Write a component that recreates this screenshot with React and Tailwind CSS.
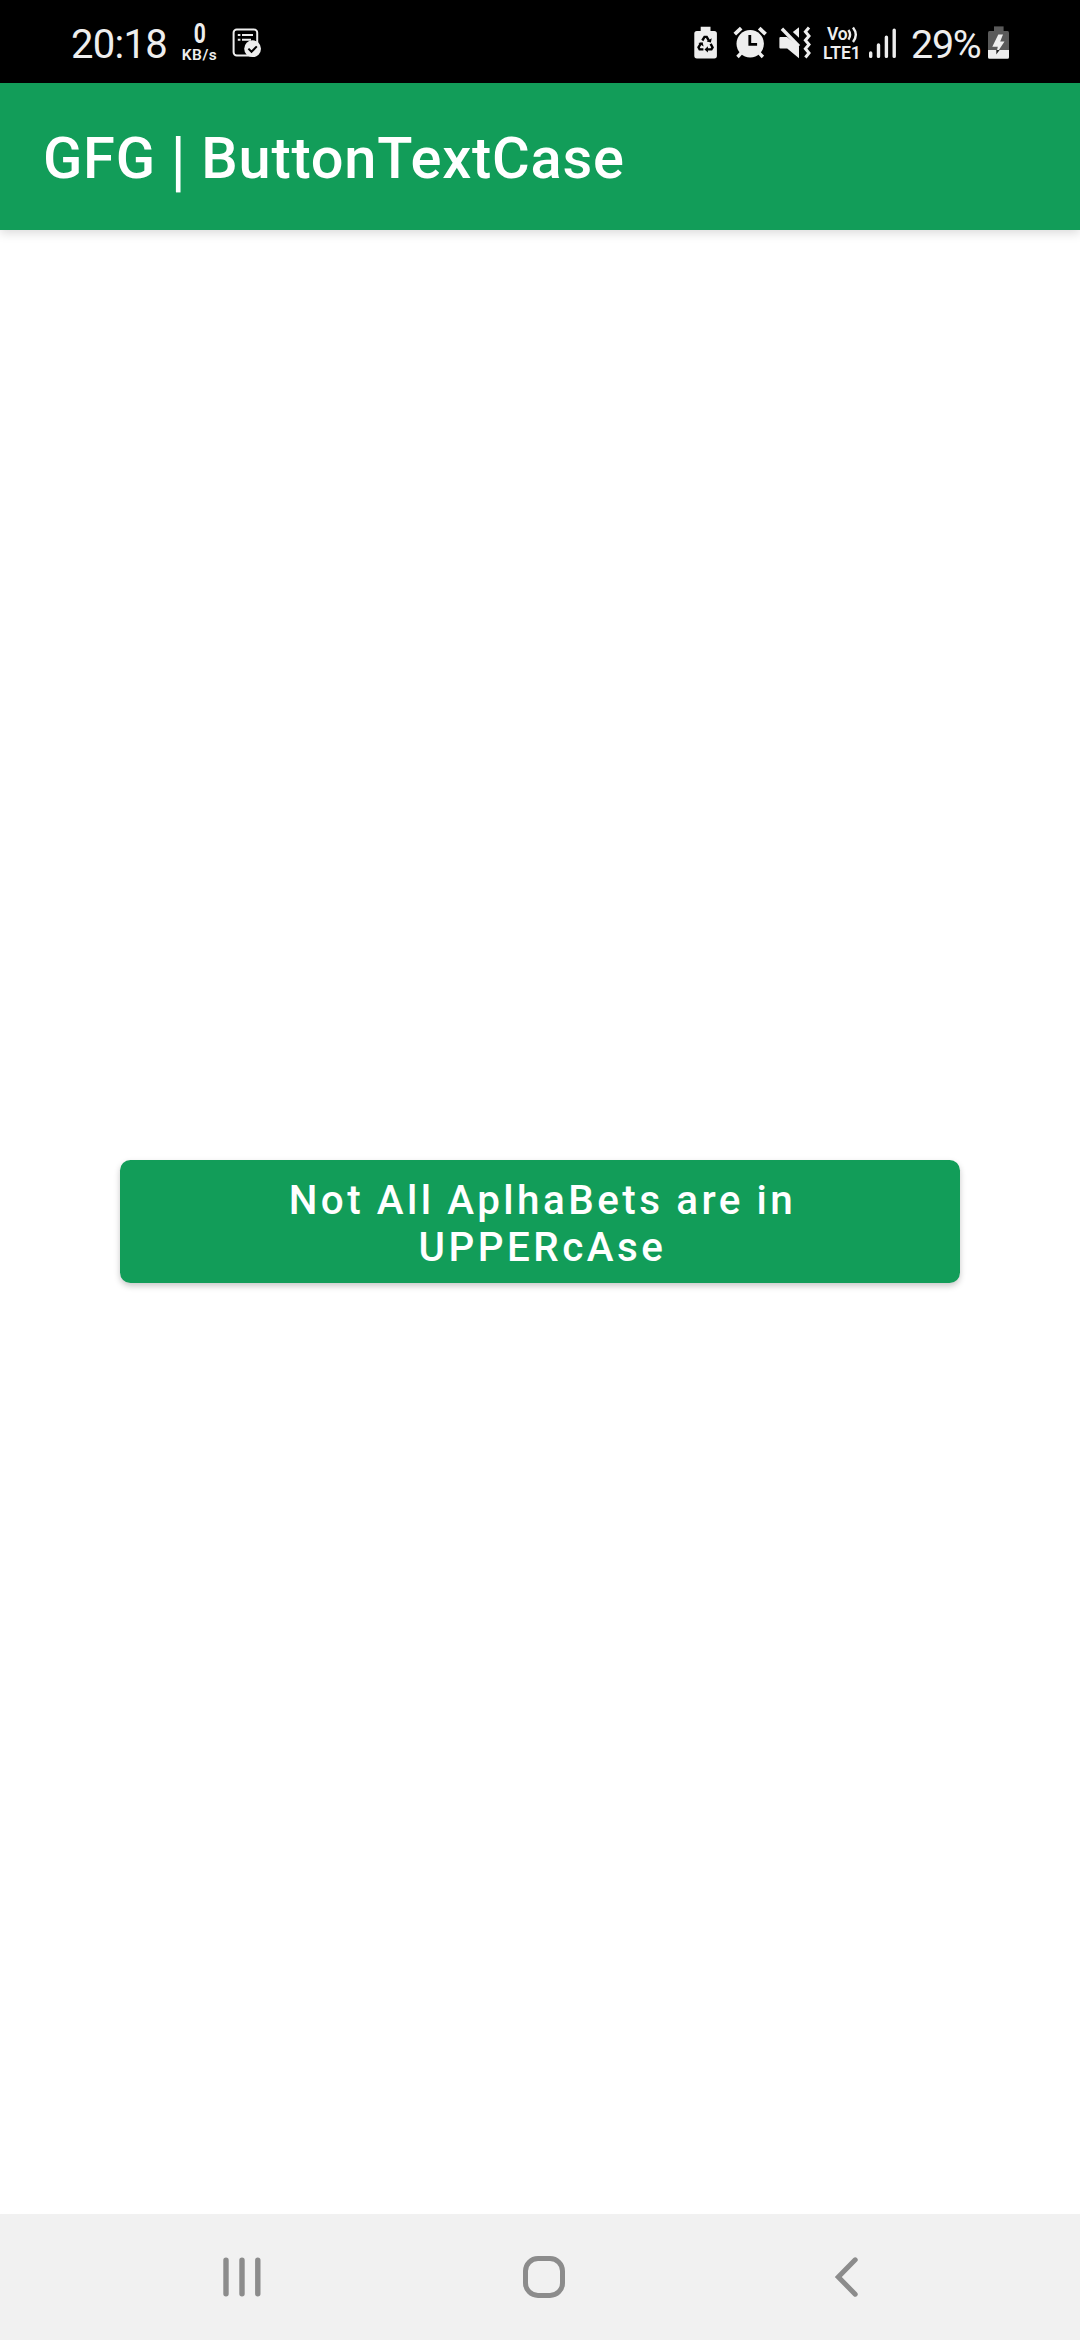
import React from "react";

function TaskIcon() {
  return (
    <svg className="ml-[15px] h-[83px] w-[30px] shrink-0" viewBox="232 0 30 83" fill="none">
      <rect x="233.6" y="29.4" width="23.6" height="26" rx="3.2" stroke="#eee" strokeWidth="2" />
      <path d="M237.8 35h2.6M242 35h11M237.8 39.8h2.6M242 39.8h9" stroke="#eee" strokeWidth="2" />
      <circle cx="252.6" cy="48.7" r="8.4" fill="#eee" />
      <path d="M248.4 48.6l3.1 3.2 5.3-5.4" stroke="#000" strokeWidth="2" />
    </svg>
  );
}

function BatterySaverIcon() {
  return (
    <svg className="h-[83px] w-[24px] shrink-0" viewBox="693 0 24 83" fill="none">
      <path d="M699.7 26.7h9.8v4.3h3.8a2.6 2.6 0 0 1 2.6 2.6v22.2a2.6 2.6 0 0 1-2.6 2.6h-17.4a2.6 2.6 0 0 1-2.6-2.6V33.6a2.6 2.6 0 0 1 2.6-2.6h3.8z" fill="#eee" />
      <g stroke="#000" strokeWidth="2.4">
        <path d="M701.3 40.5l2.2-3.6h2.2l2.2 3.8" />
        <path d="M709.6 43.8l2 3.6-1.2 2h-5" />
        <path d="M702.4 49.4h-3.8l-1.1-2 2.6-4.2" />
      </g>
      <path d="M705.7 41.4l4.2 1.1.8-4.2zM706.9 46.2v6.4l-3.4-3.2zM697.3 43.1l4.3-.9 1 4.2z" fill="#000" />
    </svg>
  );
}

function AlarmIcon() {
  return (
    <svg className="ml-[15px] h-[83px] w-[35px] shrink-0" viewBox="732 0 35 83" fill="none">
      <circle cx="749.2" cy="43.7" r="13.7" fill="#eee" />
      <path d="M733.8 34.2l6.4-6M764.6 34.2l-6.4-6" stroke="#eee" strokeWidth="3.8" />
      <path d="M740.5 52.6l-4 4.4M757.9 52.6l4 4.4" stroke="#eee" strokeWidth="3.4" />
      <path d="M748.8 35v9.3h7.3" stroke="#000" strokeWidth="2.8" />
    </svg>
  );
}

function MuteVibrateIcon() {
  return (
    <svg className="ml-[11px] h-[83px] w-[32px] shrink-0" viewBox="778 0 32 83" fill="none">
      <path d="M779.4 37h6.6l12 9.5v11.7l-11.8-9.8h-6.8a1 1 0 0 1-1-1V38a1 1 0 0 1 1-1z" fill="#eee" />
      <path d="M798 27.2v10.5l-6.2-5.7z" fill="#eee" />
      <path d="M780.9 28.8l17 17.4" stroke="#eee" strokeWidth="3.4" />
      <path d="M808 27.5l-3.6 4.3 3.6 4.2-3.6 4.3 3.6 4.2-3.6 4.3 3.6 4.2-3.6 4.5" stroke="#eee" strokeWidth="3" />
    </svg>
  );
}

function VolteLabel() {
  return (
    <div className="ml-[11px] flex h-[83px] w-[40px] shrink-0 flex-col pt-[26px] text-[#eee]">
      <div className="flex h-[17px] items-center pl-[5px]">
        <span className="w-[20px] text-[17.5px] leading-[17px] font-semibold tracking-[-0.3px]">Vo</span>
        <svg className="h-[17px] w-[12px] shrink-0" viewBox="846 25.5 12 17" fill="none" stroke="#eee" strokeWidth="2.4">
          <path d="M847.4 29.5q3.4 4.8 0 9.6M852 27q5.6 7.3 0 14.6" />
        </svg>
      </div>
      <span className="pl-[1px] text-[17.5px] leading-[20px] font-semibold tracking-[-0.1px]">LTE1</span>
    </div>
  );
}

function SignalIcon() {
  return (
    <svg className="ml-[6px] h-[83px] w-[29px] shrink-0" viewBox="868 0 29 83" stroke="#eee" strokeWidth="3.4" strokeLinecap="round">
      <path d="M870.7 53v3.4M878.5 45v11.4M886.4 37.3v19.1M894.2 30.2v26.2" />
    </svg>
  );
}

function ChargingIcon() {
  return (
    <svg className="h-[83px] w-[22px] shrink-0" viewBox="988 0 22 83">
      <path d="M994 26.4h9.6v4.8H994z" fill="#5a5a5a" />
      <path d="M989.5 31h18a1.5 1.5 0 0 1 1.5 1.5V50h-21V32.5a1.5 1.5 0 0 1 1.5-1.5z" fill="#5a5a5a" />
      <path d="M988 50h21v7.3a1.5 1.5 0 0 1-1.5 1.5h-18a1.5 1.5 0 0 1-1.5-1.5z" fill="#eee" />
      <path d="M998.3 34.5h4.7l-2.8 7h4.3L996.2 54l1.6-7.3h-5.5z" fill="#eee" />
      <path d="M996.3 50h3.3l-3.3 4.5z" fill="#222" />
    </svg>
  );
}

function StatusBar() {
  return (
    <header className="flex h-[83px] bg-black pl-[71px] pr-[70px] text-[#eee]">
      <span className="w-[110px] text-[40px] leading-[89px] tracking-[-0.7px]">20:18</span>
      <div className="flex w-[36px] flex-col items-center pt-[22px] pl-px">
        <span className="scale-x-[.78] text-[27px] leading-[24px] font-bold">0</span>
        <span className="text-[15.5px] leading-[18px] font-semibold tracking-[0.5px]">KB/s</span>
      </div>
      <TaskIcon />
      <div className="ml-auto flex">
        <BatterySaverIcon />
        <AlarmIcon />
        <MuteVibrateIcon />
        <VolteLabel />
        <SignalIcon />
        <span className="ml-[14px] w-[77px] text-[39.5px] leading-[89px] tracking-[-1.3px]">29%</span>
        <ChargingIcon />
      </div>
    </header>
  );
}

function NavigationBar() {
  return (
    <nav className="flex h-[126px] items-center bg-[#f1f1f1] pl-[223px]">
      <svg className="h-[42px] w-[38px]" viewBox="0 0 38 42" stroke="#8c8c8c" strokeWidth="5.4" strokeLinecap="round">
        <path d="M3 4.2v33.6M19 4.2v33.6M34.8 4.2v33.6" />
      </svg>
      <div className="ml-[262px] size-[42px] rounded-[15px] border-5 border-[#8c8c8c]" />
      <svg className="ml-[269px] h-[42px] w-[26px]" viewBox="0 0 26 42" fill="none" stroke="#8c8c8c" strokeWidth="5" strokeLinecap="round">
        <path d="M21.2 3.8L4.3 21l16.9 17.2" />
      </svg>
    </nav>
  );
}

export default function App() {
  return (
    <div className="flex h-[2340px] w-[1080px] flex-col overflow-hidden bg-white font-[Roboto,sans-serif]">
      <StatusBar />
      <div className="flex h-[147px] items-center bg-[#129d59] pt-[3px] pl-[43px] shadow-[0_3px_10px_rgba(0,0,0,0.15)]">
        <h1 className="text-[57.75px] leading-[68px] font-medium tracking-[0.78px] whitespace-nowrap text-white">
          GFG <span className="inline-block origin-[50%_25%] scale-y-[1.17]">|</span> ButtonTextCase
        </h1>
      </div>
      <main className="flex flex-1 flex-col items-center pt-[930px]">
        <button className="h-[123px] w-[840px] rounded-[10.5px] bg-[#129d59] pt-[4px] pl-[5px] text-[40.4px] leading-[47px] font-medium tracking-[3.48px] [word-spacing:-0.9px] text-white shadow-[0_3px_6px_rgba(0,0,0,0.22)]">
          Not All AplhaBets are in
          <br />
          UPPERcAse
        </button>
      </main>
      <NavigationBar />
    </div>
  );
}
